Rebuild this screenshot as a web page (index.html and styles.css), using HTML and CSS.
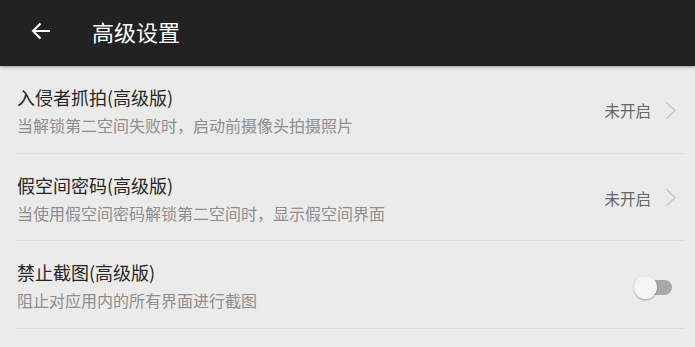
FILE: index.html
```html
<!DOCTYPE html>
<html lang="zh">
<head>
<meta charset="utf-8">
<link rel="stylesheet" href="styles.css">
</head>
<body>
<div class="app">
  <header class="bar">
    <svg class="back" width="20" height="18" viewBox="0 0 20 18"><path d="M19 9H2.5M9.5 1.5L2 9l7.5 7.5" fill="none" stroke="#fff" stroke-width="2"/></svg>
    <h1 class="bar-title">高级设置</h1>
  </header>
  <main class="list">
    <div class="row">
      <div class="texts">
        <div class="title">入侵者抓拍(高级版)</div>
        <div class="sub">当解锁第二空间失败时，启动前摄像头拍摄照片</div>
      </div>
      <div class="right">
        <span class="state">未开启</span>
        <svg class="chev" width="12" height="19" viewBox="0 0 12 19"><path d="M1.5 1.5l8.5 8-8.5 8" fill="none" stroke="#c4c4c4" stroke-width="1.3"/></svg>
      </div>
    </div>
    <div class="row">
      <div class="texts">
        <div class="title">假空间密码(高级版)</div>
        <div class="sub">当使用假空间密码解锁第二空间时，显示假空间界面</div>
      </div>
      <div class="right">
        <span class="state">未开启</span>
        <svg class="chev" width="12" height="19" viewBox="0 0 12 19"><path d="M1.5 1.5l8.5 8-8.5 8" fill="none" stroke="#c4c4c4" stroke-width="1.3"/></svg>
      </div>
    </div>
    <div class="row">
      <div class="texts">
        <div class="title">禁止截图(高级版)</div>
        <div class="sub">阻止对应用内的所有界面进行截图</div>
      </div>
      <div class="right">
        <span class="switch"><span class="thumb"></span></span>
      </div>
    </div>
  </main>
</div>
</body>
</html>
```

FILE: styles.css
```css
* { box-sizing: border-box; }
html, body { margin: 0; padding: 0; }
body {
  width: 695px;
  height: 347px;
  overflow: hidden;
  background: #ebebeb;
  font-family: "Noto Sans CJK SC", "Noto Sans", sans-serif;
}
.bar {
  height: 66px;
  background: #222222;
  display: flex;
  align-items: center;
  box-shadow: 0 1px 3px rgba(0,0,0,0.35);
  position: relative;
  z-index: 1;
}
.back { margin-left: 31px; margin-top: -4px; }
.bar-title {
  margin: 0 0 0 41px;
  font-size: 22px;
  font-weight: 400;
  color: #ffffff;
  line-height: 1;
  margin-top: -4px;
}
.list { padding: 0 11px 0 16px; }
.row {
  height: 87.5px;
  border-bottom: 1px solid #dedede;
  display: flex;
  justify-content: space-between;
}
.texts { padding-top: 19px; padding-left: 1px; }
.title {
  font-size: 18px;
  line-height: 24px;
  color: #262626;
}
.sub {
  margin-top: 5px;
  font-size: 16px;
  line-height: 22px;
  color: #8e8e8e;
}
.right {
  display: flex;
  align-items: center;
  padding-top: 2px;
}
.state {
  font-size: 15.5px;
  color: #666666;
  margin-right: 14px;
}
.chev { margin-right: 7px; }
.switch {
  position: relative;
  width: 33px;
  height: 15px;
  border-radius: 8px;
  background: #a8a8a8;
  margin-right: 12px;
  margin-top: 4px;
}
.thumb {
  position: absolute;
  left: -5px;
  top: -4px;
  width: 23px;
  height: 23px;
  border-radius: 50%;
  background: #f5f5f5;
  box-shadow: 0 1px 2px rgba(0,0,0,0.3);
}
```
